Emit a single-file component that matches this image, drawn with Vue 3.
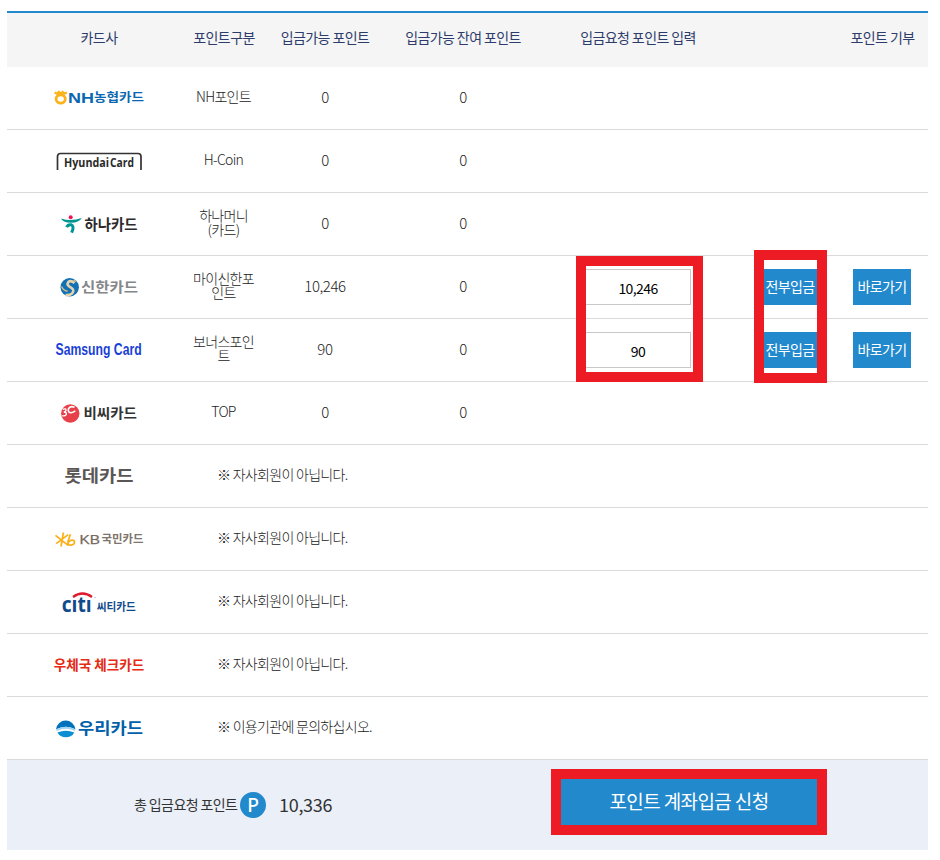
<script setup>
import { ref, computed } from 'vue';

const cards = ref([
  { id: 'nh', name: ['NH포인트'], point: 0, rest: 0 },
  { id: 'hyundai', name: ['H-Coin'], point: 0, rest: 0 },
  { id: 'hana', name: ['하나머니', '(카드)'], point: 0, rest: 0 },
  { id: 'shinhan', name: ['마이신한포', '인트'], point: 10246, rest: 0, request: '10,246' },
  { id: 'samsung', name: ['보너스포인', '트'], point: 90, rest: 0, request: '90' },
  { id: 'bc', name: ['TOP'], point: 0, rest: 0 },
  { id: 'lotte', message: '※ 자사회원이 아닙니다.' },
  { id: 'kb', message: '※ 자사회원이 아닙니다.' },
  { id: 'citi', message: '※ 자사회원이 아닙니다.' },
  { id: 'post', message: '※ 자사회원이 아닙니다.' },
  { id: 'woori', message: '※ 이용기관에 문의하십시오.' }
]);

const toNumber = (value) => Number(String(value || 0).replace(/,/g, '')) || 0;

const total = computed(() => cards.value.reduce((sum, card) => sum + toNumber(card.request), 0));

const format = (value) => value.toLocaleString('en-US');

const depositAll = (card) => {
  card.request = format(card.point);
};
</script>

<template>
  <div class="page">
    <div class="table">
      <div class="row head">
        <div class="cell">카드사</div>
        <div class="cell">포인트구분</div>
        <div class="cell">입금가능 포인트</div>
        <div class="cell">입금가능 잔여 포인트</div>
        <div class="cell">입금요청 포인트 입력</div>
        <div class="cell"></div>
        <div class="cell">포인트 기부</div>
      </div>

      <div v-for="card in cards" :key="card.id" class="row">
        <div class="cell">
          <svg class="logo" width="92" height="28" viewBox="0 0 92 28">
            <g v-if="card.id === 'nh'">
              <path d="M1.5 8.6 L4.4 9.8 L5.8 8 L7.7 9.8 L9.6 8 L11 9.8 L13.9 8.6" fill="none" stroke="#fbb31c" stroke-width="2.2" />
              <ellipse cx="7.7" cy="15" rx="4.6" ry="4.1" fill="none" stroke="#fbb31c" stroke-width="2.8" />
              <text x="15" y="19" textLength="26" lengthAdjust="spacingAndGlyphs" class="latin" font-size="14" font-weight="700" fill="#0b67b2">NH</text>
              <text x="41" y="18.3" textLength="50" lengthAdjust="spacingAndGlyphs" font-size="12" font-weight="700" fill="#0b67b2">농협카드</text>
            </g>
            <g v-else-if="card.id === 'hyundai'">
              <path d="M4.5 23 V9.5 Q4.5 6.5 7.5 6.5 H85 Q88 6.5 88 9.5 V23" fill="none" stroke="#333" stroke-width="1.7" />
              <text x="11" y="20.3" textLength="45" lengthAdjust="spacingAndGlyphs" class="round" font-size="12" font-weight="700" fill="#2b2b2b">Hyundai</text>
              <text x="57" y="20.3" textLength="24" lengthAdjust="spacingAndGlyphs" class="round" font-size="12" font-weight="700" fill="#2b2b2b">Card</text>
            </g>
            <g v-else-if="card.id === 'hana'">
              <circle cx="17.7" cy="7.2" r="2" fill="#ed1651" />
              <path d="M8 8.4 Q18 11.6 28.8 8 Q26 12.8 18 12.8 Q10.5 12.8 8 8.4Z" fill="#009591" />
              <path d="M13.6 17.2 Q15 14.3 18 14.7 Q21.8 16 18.6 22.6" fill="none" stroke="#009591" stroke-width="3" />
              <text x="31.5" y="19.5" textLength="53" lengthAdjust="spacingAndGlyphs" font-size="15" font-weight="700" fill="#2d2a2b">하나카드</text>
            </g>
            <g v-else-if="card.id === 'shinhan'">
              <circle cx="16.7" cy="14.3" r="9.2" fill="#1270b4" />
              <path d="M21.5 10 Q17.5 6.8 15.2 9.2 Q13.2 12 17.6 14.4 Q22.3 17.2 19 20.5 Q16.5 22.6 12.5 22" fill="none" stroke="#e4d3b0" stroke-width="2.6" />
              <path d="M8.6 13.5 Q10.5 17.8 14.6 18.2 M20.5 7.2 L23.2 8.6" fill="none" stroke="#c9b88f" stroke-width="1.6" />
              <text x="28" y="18.7" textLength="57" lengthAdjust="spacingAndGlyphs" font-size="14" font-weight="700" fill="#85868a">신한카드</text>
            </g>
            <g v-else-if="card.id === 'samsung'">
              <text x="2.6" y="19" textLength="86" lengthAdjust="spacingAndGlyphs" class="latin" font-size="16" font-weight="700" fill="#1a3fd6">Samsung Card</text>
            </g>
            <g v-else-if="card.id === 'bc'">
              <circle cx="17.3" cy="14.5" r="9.2" fill="#e8404a" />
              <path d="M9.8 10.3 Q13.3 9 13 11.5 Q12.8 12.8 10.8 13 Q14 13.2 13.3 15.3 Q12 17.6 9.2 16.6" fill="none" stroke="#fff" stroke-width="1.4" />
              <path d="M21.5 8.2 Q17 6.6 15.4 9.8 Q14.8 13.8 18 13.8 Q20.5 13.6 22.3 11.8" fill="none" stroke="#fff" stroke-width="1.6" />
              <text x="30.5" y="19" textLength="53.5" lengthAdjust="spacingAndGlyphs" font-size="14" font-weight="700" fill="#333">비씨카드</text>
            </g>
            <g v-else-if="card.id === 'lotte'">
              <text x="11.5" y="20" textLength="69" lengthAdjust="spacingAndGlyphs" font-size="17.5" font-weight="700" fill="#5a5655">롯데카드</text>
            </g>
            <g v-else-if="card.id === 'kb'">
              <path d="M10.4 7.5 L8 21.5 M2.5 10.4 L15.5 20.6 M15.2 9.6 L3.2 18.6 M17.4 9.2 L15 16.5 Q14.6 20.3 18 20.2 Q21.8 19.6 21.5 16.3 Q19.3 13.6 15.3 17.2" fill="none" stroke="#fbaf17" stroke-width="1.7" />
              <text x="26.5" y="18.7" textLength="20.5" lengthAdjust="spacingAndGlyphs" class="latin" font-size="13.4" fill="#766a61" stroke="#766a61" stroke-width="0.25">KB</text>
              <text x="48.5" y="18" textLength="42" lengthAdjust="spacingAndGlyphs" font-size="11.5" font-weight="700" fill="#80756c">국민카드</text>
            </g>
            <g v-else-if="card.id === 'citi'">
              <path d="M20 9 Q29.5 2 39 9" fill="none" stroke="#e0182d" stroke-width="2.2" />
              <text x="8.7" y="23.7" textLength="30" lengthAdjust="spacingAndGlyphs" class="round" font-size="22" font-weight="700" fill="#114a8b">cıtı</text>
              <circle cx="42" cy="9.6" r="0.7" fill="#8ea6c4" />
              <text x="43.7" y="22.6" textLength="39" lengthAdjust="spacingAndGlyphs" font-size="11" font-weight="700" fill="#114a8b">씨티카드</text>
            </g>
            <g v-else-if="card.id === 'post'">
              <text x="0.8" y="19" textLength="90.5" lengthAdjust="spacingAndGlyphs" font-size="14" font-weight="700" fill="#e62a16">우체국 체크카드</text>
            </g>
            <g v-else>
              <path d="M3 15.2 A9.8 10.2 0 0 1 22.4 15.2 Q13 10.2 3 15.2Z" fill="#0072bc" />
              <path d="M3 15.2 Q13 10.2 22.4 15.2 L21.8 17 Q13 12.6 3.8 17Z" fill="#9fd5f3" />
              <path d="M4.4 18.4 Q13 15 21.3 18.4 Q18.8 23.2 12.8 23.2 Q7 23.2 4.4 18.4Z" fill="#0a8fd4" />
              <text x="25" y="19.8" textLength="65" lengthAdjust="spacingAndGlyphs" font-size="16" font-weight="700" fill="#0060a9">우리카드</text>
            </g>
          </svg>
        </div>

        <div v-if="card.message" class="cell message">{{ card.message }}</div>
        <template v-else>
          <div class="cell kind">
            <span v-for="line in card.name" :key="line">{{ line }}</span>
          </div>
          <div class="cell number">{{ format(card.point) }}</div>
          <div class="cell number">{{ format(card.rest) }}</div>
          <template v-if="card.request">
            <div class="cell"><input v-model="card.request" class="point-input" /></div>
            <div class="cell"><button class="small-button" @click="depositAll(card)">전부입금</button></div>
            <div class="cell donate"><button class="small-button">바로가기</button></div>
          </template>
        </template>
      </div>

      <div class="footer">
        <div class="total">
          <span class="total-label">총 입금요청 포인트</span>
          <span class="total-icon">P</span>
          <strong class="total-value">{{ format(total) }}</strong>
        </div>
        <button class="submit-button">포인트 계좌입금 신청</button>
      </div>
    </div>

    <div class="mark mark-input"></div>
    <div class="mark mark-all"></div>
    <div class="mark mark-submit"></div>
  </div>
</template>

<style>
body {
  background: #fff;
}
</style>

<style scoped>
.page {
  position: relative;
  box-sizing: border-box;
  width: 940px;
  height: 860px;
  padding: 11px 12px 0 7px;
  overflow: hidden;
  font-family: 'Noto Sans CJK KR', sans-serif;
  font-size: 14px;
  font-weight: 300;
  letter-spacing: -0.7px;
  color: #222;
}

.table {
  border-top: 2px solid #2389cd;
}

.row {
  display: grid;
  grid-template-columns: 184px 66px 136px 140px 210px 94px 91px;
  box-sizing: border-box;
  height: 63px;
  border-bottom: 1px solid #dadada;
}

.head {
  height: 54px;
  padding-bottom: 6px;
  border-bottom: none;
  background: #f5f5f5;
  color: #2d3c6b;
  font-weight: 400;
  letter-spacing: -0.6px;
}

.cell {
  display: flex;
  align-items: center;
  justify-content: center;
  white-space: nowrap;
}

.logo {
  display: block;
  overflow: visible;
  letter-spacing: 0;
}

.latin {
  font-family: 'Liberation Sans', sans-serif;
}

.round {
  font-family: 'Open Sans', sans-serif;
}

.kind {
  flex-direction: column;
  padding: 0 1px 4px 0;
  line-height: 14px;
}

.number {
  padding-bottom: 3px;
  font-size: 15px;
  letter-spacing: -0.4px;
}

.message {
  grid-column: 2 / -1;
  justify-content: flex-start;
  padding: 0 0 4px 26px;
}

.point-input {
  box-sizing: border-box;
  width: 106px;
  height: 36px;
  padding: 2px 0 0;
  border: 1px solid #c8c8c8;
  background: #fff;
  color: #000;
  font: inherit;
  font-weight: 400;
  letter-spacing: -0.6px;
  text-align: center;
}

.small-button {
  width: 58px;
  height: 36px;
  padding: 0 0 3px;
  border: none;
  background: #2389cd;
  color: #fff;
  font: inherit;
  font-weight: 400;
  letter-spacing: -0.6px;
  cursor: pointer;
}

.donate {
  padding-right: 1px;
}

.footer {
  display: flex;
  align-items: center;
  justify-content: space-between;
  box-sizing: border-box;
  height: 90px;
  padding: 0 111px 6px 127px;
  background: #eaeff8;
}

.total {
  display: flex;
  align-items: center;
  padding-top: 6px;
}

.total-label {
  width: 106px;
  padding-bottom: 2px;
  color: #333;
  font-weight: 400;
  letter-spacing: -0.6px;
  white-space: nowrap;
}

.total-icon {
  width: 26px;
  height: 26px;
  border-radius: 50%;
  background: #2389cd;
  color: #fff;
  font-size: 18px;
  font-weight: 500;
  line-height: 24px;
  letter-spacing: 0;
  text-align: center;
}

.total-value {
  margin-left: 13px;
  padding-bottom: 3px;
  color: #333;
  font-size: 18px;
  font-weight: 400;
  letter-spacing: -0.3px;
}

.submit-button {
  width: 256px;
  height: 46px;
  padding: 0 0 3px;
  border: none;
  background: #2389cd;
  color: #fff;
  font: inherit;
  font-size: 19px;
  font-weight: 400;
  letter-spacing: -0.6px;
  cursor: pointer;
}

/* red guide frames laid over the table */
.mark {
  position: absolute;
  box-sizing: border-box;
  border: 10px solid #ed1c24;
  pointer-events: none;
}

.mark-input {
  left: 576px;
  top: 256px;
  width: 127px;
  height: 126px;
}

.mark-all {
  left: 754px;
  top: 250px;
  width: 73px;
  height: 133px;
}

.mark-submit {
  left: 551px;
  top: 769px;
  width: 276px;
  height: 66px;
}
</style>
